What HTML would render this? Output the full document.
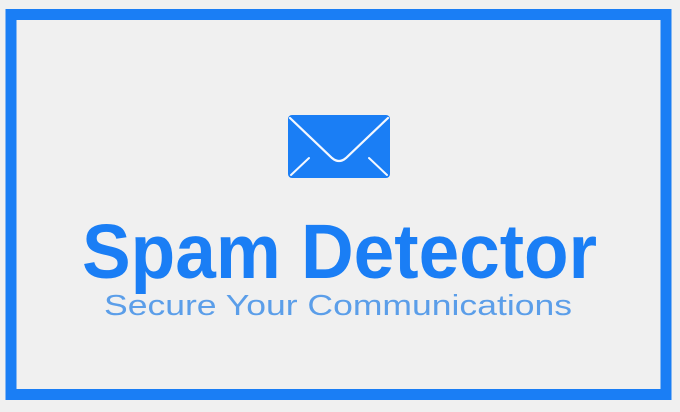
<!DOCTYPE html>
<html><head><style>
html,body{margin:0;padding:0;background:#f0f0f0;width:680px;height:412px;overflow:hidden}
</style></head><body>
<svg width="680" height="412" viewBox="0 0 680 412" xmlns="http://www.w3.org/2000/svg">
<rect x="0" y="0" width="680" height="412" fill="#f0f0f0"/>
<rect x="11" y="14.5" width="655" height="380" fill="none" stroke="#1a7ef5" stroke-width="11"/>
<rect x="288" y="115" width="102" height="63" rx="4" fill="#1a7ef5"/>
<path d="M290 118 L332 158 Q339 164 346 158 L388 118" fill="none" stroke="#f4f8ff" stroke-width="2.2" stroke-linecap="round"/>
<path d="M291 175 L309 158 M387 175 L369 158" fill="none" stroke="#f4f8ff" stroke-width="2" stroke-linecap="round"/>
<text x="82" y="278" font-family="Liberation Sans, sans-serif" font-weight="bold" font-size="77" fill="#1a7ef5" textLength="515" lengthAdjust="spacingAndGlyphs">Spam Detector</text>
<text x="104" y="315" font-family="Liberation Sans, sans-serif" font-size="29" fill="#5b9ee9" textLength="468" lengthAdjust="spacingAndGlyphs" style="font-weight:300">Secure Your Communications</text>
</svg>
</body></html>
